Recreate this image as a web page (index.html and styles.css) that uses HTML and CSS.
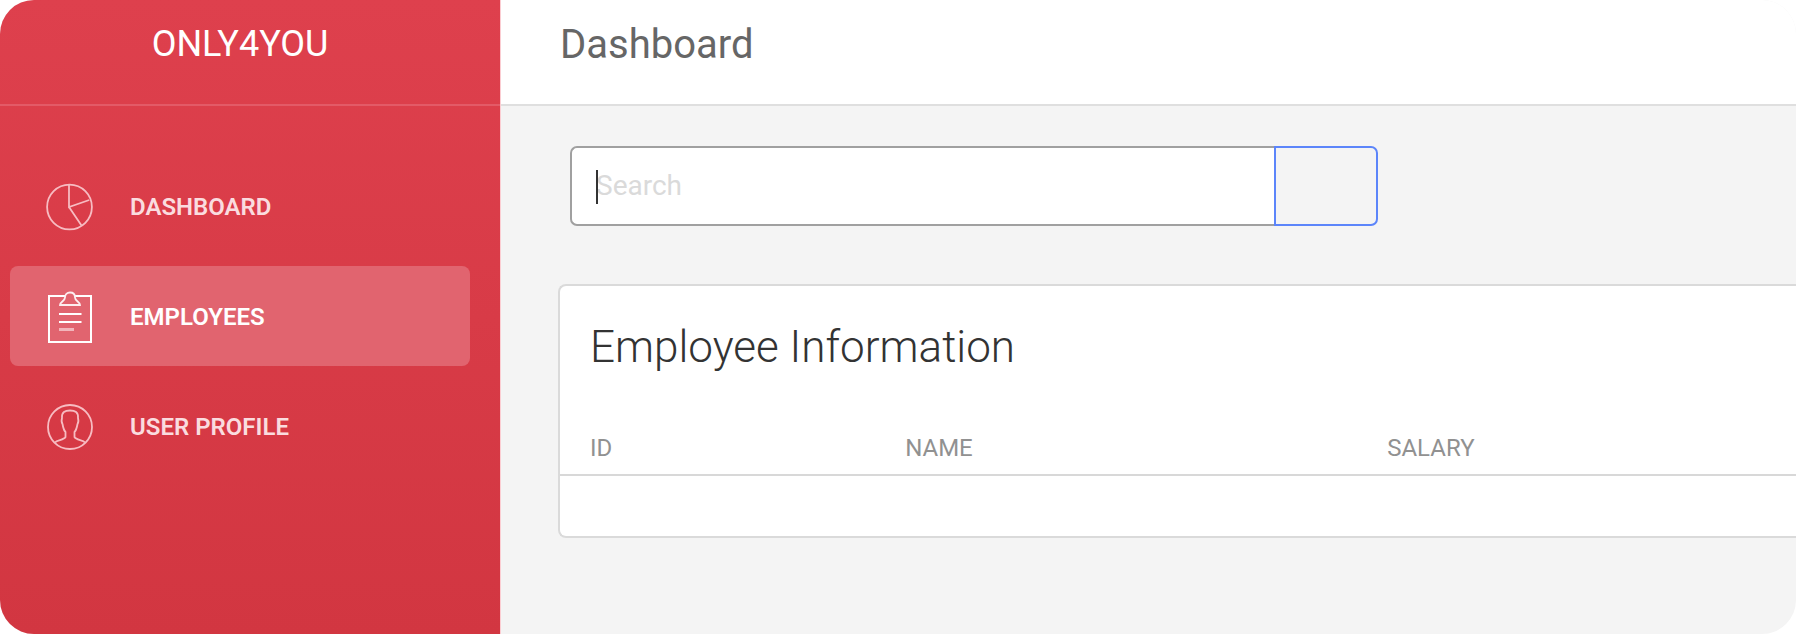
FILE: index.html
```html
<!DOCTYPE html>
<html lang="en">
<head>
<meta charset="utf-8">
<meta name="viewport" content="width=device-width, initial-scale=1">
<title>Dashboard</title>
<link rel="stylesheet" href="styles.css">
</head>
<body>
<div class="app">
  <aside class="sidebar">
    <div class="brand"><a class="brand-link" href="#">ONLY4YOU</a></div>
    <nav class="menu">
      <a class="menu-item" href="#">
        <svg class="icon" viewBox="0 0 48 54" aria-hidden="true">
          <circle cx="23.500" cy="27" r="22.4"/>
          <path d="M23 4.600V27L43.300 20M23 27L35.500 45.500"/>
        </svg>
        <span>DASHBOARD</span>
      </a>
      <a class="menu-item active" href="#">
        <svg class="icon" viewBox="0 0 48 54" aria-hidden="true">
          <path class="solid" d="M19 6H3V52H45V6H29"/>
          <path d="M14 15C14 12 19 11 19 7.500C19 4.500 21 2.500 24 2.500S29 4.500 29 7.500C29 11 34 12 34 15Z"/>
          <path class="solid" d="M13 24H35.500M13 32H35.500"/>
          <path class="faint" d="M13 39.500H28"/>
        </svg>
        <span>EMPLOYEES</span>
      </a>
      <a class="menu-item" href="#">
        <svg class="icon" viewBox="0 0 48 54" aria-hidden="true">
          <circle cx="24" cy="27" r="22"/>
          <path d="M9 42.500C11 40 18 40 19.500 37V32C17.500 30 17 27 16.500 24C15 22 15.500 20 16 18C15.500 12 19 10.500 24 10.500S32.500 12 32 18C32.500 20 33 22 31.500 24C31 27 30.500 30 28.500 32V37C30 40 37 40 39 42.500"/>
        </svg>
        <span>USER PROFILE</span>
      </a>
    </nav>
  </aside>
  <div class="main">
    <header class="topbar"><h1 class="page-title">Dashboard</h1></header>
    <main class="content">
      <form class="search">
        <div class="field">
          <input class="search-input" type="text" placeholder="Search" aria-label="Search">
          <span class="caret"></span>
        </div>
        <button class="search-button" type="button" aria-label="Submit search"></button>
      </form>
      <section class="card">
        <h2 class="card-title">Employee Information</h2>
        <table class="table">
          <thead>
            <tr><th class="col-id">ID</th><th class="col-name">NAME</th><th>SALARY</th></tr>
          </thead>
          <tbody></tbody>
        </table>
      </section>
    </main>
  </div>
</div>
</body>
</html>
```
FILE: styles.css
```css
* {
  box-sizing: border-box;
}

body {
  margin: 0;
  background: #fff;
  font-family: Roboto, "Liberation Sans", sans-serif;
}

.app {
  display: flex;
  min-height: 100vh;
  overflow: hidden;
  border-radius: 34px;
  background: #f4f4f4;
}

.sidebar {
  flex: 0 0 500px;
  background: linear-gradient(#de404d, #d23641);
}

.brand {
  display: flex;
  justify-content: center;
  height: 106px;
  padding: 23px 20px 0 0;
  border-bottom: 2px solid #e35a67;
}

.brand-link {
  color: #fff;
  font-size: 36px;
  line-height: 42px;
  text-decoration: none;
}

.menu {
  display: flex;
  flex-direction: column;
  gap: 10px;
  padding: 50px 30px 0 10px;
}

.menu-item {
  display: flex;
  align-items: center;
  gap: 36px;
  height: 100px;
  padding: 2px 0 0 36px;
  border-radius: 8px;
  color: #fadcdf;
  font-size: 24px;
  font-weight: 600;
  text-decoration: none;
}

.menu-item.active {
  background: #e1646f;
  color: #fff;
}

.icon {
  width: 48px;
  height: 54px;
  fill: none;
  stroke: #f7bcc2;
  stroke-width: 1.8;
}

.active .icon {
  stroke: #fdeef0;
}

.icon .solid {
  stroke: #fff;
  stroke-width: 2;
}

.icon .faint {
  stroke: #f2b5bb;
  stroke-width: 3;
}

.main {
  flex: 1;
  min-width: 0;
  border-left: 1px solid #fbcdd2;
}

.topbar {
  height: 106px;
  padding: 21px 59px;
  border-bottom: 2px solid #dfdfdf;
  background: #fff;
}

.page-title {
  margin: 0;
  color: #666;
  font-size: 40px;
  font-weight: 400;
  line-height: 48px;
}

.content {
  padding: 40px 0 0 57px;
}

.search {
  display: flex;
  width: 808px;
  height: 80px;
  margin-left: 12px;
}

.field {
  position: relative;
  flex: 1;
}

.search-input {
  width: 100%;
  height: 100%;
  padding: 0 24px 2px;
  border: 2px solid #a0a0a0;
  border-right: 0;
  border-radius: 7px 0 0 7px;
  outline: 0;
  background: #fff;
  color: #333;
  font: 28px Roboto, "Liberation Sans", sans-serif;
}

.search-input::placeholder {
  color: #dadada;
  opacity: 1;
}

.caret {
  position: absolute;
  top: 24px;
  left: 26px;
  width: 2px;
  height: 34px;
  background: #333;
}

.search-button {
  width: 104px;
  padding: 0;
  border: 2px solid #5c85fa;
  border-radius: 0 7px 7px 0;
  background: transparent;
}

.card {
  margin-top: 58px;
  padding-bottom: 60px;
  border: 2px solid #dadada;
  border-right: 0;
  border-radius: 8px 0 0 8px;
  background: #fff;
}

.card-title {
  margin: 0;
  padding: 34px 30px 40px;
  color: #333;
  font-size: 44px;
  font-weight: 300;
  line-height: 54px;
}

.table {
  width: 100%;
  border-collapse: collapse;
  table-layout: fixed;
}

.table th {
  height: 61px;
  padding: 7px 30px 0;
  border-bottom: 2px solid #d8d8d8;
  color: #919191;
  font-size: 24px;
  font-weight: 400;
  text-align: left;
}

.col-id {
  width: 25.5%;
}

.col-name {
  width: 39%;
}
```
